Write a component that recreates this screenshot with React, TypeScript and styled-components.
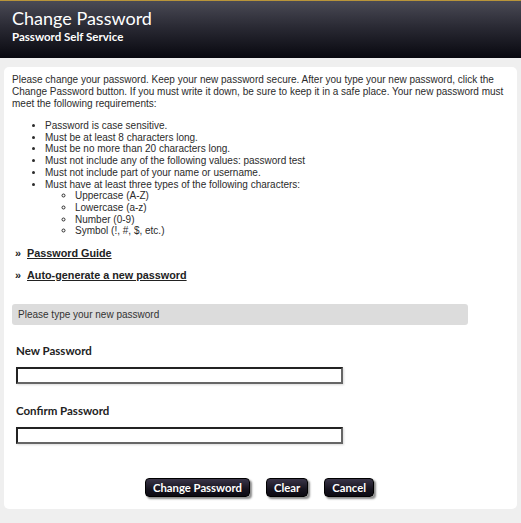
import React from "react";
import styled, { createGlobalStyle } from "styled-components";

const Global = createGlobalStyle`
  html, body { margin: 0; padding: 0; background: #efefef; }
  body { font-family: "Liberation Sans", Arial, sans-serif; }
`;

const Page = styled.div`
  width: 521px;
  height: 523px;
  background: #efefef;
  display: flex;
  flex-direction: column;
  overflow: hidden;
`;

const Header = styled.header`
  height: 58px;
  box-sizing: border-box;
  border-top: 1px solid #b8943a;
  background: linear-gradient(to bottom, #4a4a55 0%, #2a2a34 45%, #08080f 100%);
  padding: 5px 12px 0;
  color: #fff;
  font-family: Lato, "Open Sans", sans-serif;
`;

const Title = styled.h1`
  margin: 0;
  font-size: 18px;
  font-weight: 400;
  line-height: 24px;
`;

const Subtitle = styled.div`
  font-size: 11.5px;
  font-weight: 700;
  line-height: 14px;
`;

const Panel = styled.main`
  margin: 9px 4px 0;
  background: #fff;
  border-radius: 5px;
  padding: 7px 8px 12px;
  color: #2b2b2b;
  font-size: 10px;
  line-height: 11.7px;
`;

const Intro = styled.p`
  margin: 0;
  line-height: 12px;
`;

const List = styled.ul<{ $sub?: boolean }>`
  margin: ${(p) => (p.$sub ? "0" : "10px 0 0")};
  padding-left: ${(p) => (p.$sub ? "30px" : "33px")};
  list-style: ${(p) => (p.$sub ? "circle" : "disc")};
`;

const LinkRow = styled.div<{ $top: number }>`
  margin-top: ${(p) => p.$top}px;
  padding-left: 3px;
  display: flex;
  gap: 6px;
  font-weight: 700;
  font-size: 10.8px;
  color: #222;
`;

const Link = styled.a`
  color: #222;
  text-decoration: underline;
  cursor: pointer;
`;

const Notice = styled.div`
  margin-top: 23px;
  width: 456px;
  height: 21px;
  box-sizing: border-box;
  background: #dcdcdc;
  border-radius: 3px;
  padding: 0 6px;
  display: flex;
  align-items: center;
  color: #333;
`;

const Field = styled.div<{ $top: number }>`
  margin-top: ${(p) => p.$top}px;
  padding-left: 4px;
  display: flex;
  flex-direction: column;
`;

const Label = styled.label`
  font-family: Lato, "Open Sans", sans-serif;
  font-weight: 700;
  font-size: 11.5px;
  line-height: 14px;
  color: #222;
  margin-bottom: 9px;
`;

const Input = styled.input`
  width: 327px;
  height: 17px;
  box-sizing: border-box;
  border: 2px solid #222;
  border-right-color: #666;
  border-bottom-color: #666;
  box-shadow: 1px 1px 2px rgba(0, 0, 0, 0.15);
  background: #fff;
  padding: 0 3px;
  margin: 0;
  outline: none;
`;

const Buttons = styled.div`
  margin-top: 34px;
  display: flex;
  justify-content: center;
  gap: 16px;
  padding-right: 2px;
`;

const Button = styled.button`
  height: 19px;
  padding: 0 7px;
  border: 1px solid #000;
  border-radius: 4px;
  background: linear-gradient(to bottom, #3a3548 0%, #17141f 60%, #0c0a12 100%);
  color: #fff;
  font-family: Lato, "Open Sans", sans-serif;
  font-weight: 700;
  font-size: 11.3px;
  line-height: 17px;
  box-shadow: 2px 2px 2px rgba(0, 0, 0, 0.45);
  cursor: pointer;
`;

export default function App() {
  return (
    <Page>
      <Global />
      <Header>
        <Title>Change Password</Title>
        <Subtitle>Password Self Service</Subtitle>
      </Header>
      <Panel>
        <Intro>
          Please change your password. Keep your new password secure. After you type your new
          password, click the Change Password button. If you must write it down, be sure to keep it
          in a safe place. Your new password must meet the following requirements:
        </Intro>
        <List>
          <li>Password is case sensitive.</li>
          <li>Must be at least 8 characters long.</li>
          <li>Must be no more than 20 characters long.</li>
          <li>Must not include any of the following values: password test</li>
          <li>Must not include part of your name or username.</li>
          <li>
            Must have at least three types of the following characters:
            <List $sub>
              <li>Uppercase (A-Z)</li>
              <li>Lowercase (a-z)</li>
              <li>Number (0-9)</li>
              <li>Symbol (!, #, $, etc.)</li>
            </List>
          </li>
        </List>
        <LinkRow $top={11}>
          <span>»</span>
          <Link>Password Guide</Link>
        </LinkRow>
        <LinkRow $top={10}>
          <span>»</span>
          <Link>Auto-generate a new password</Link>
        </LinkRow>
        <Notice>Please type your new password</Notice>
        <Field $top={19}>
          <Label>New Password</Label>
          <Input type="password" />
        </Field>
        <Field $top={20}>
          <Label>Confirm Password</Label>
          <Input type="password" />
        </Field>
        <Buttons>
          <Button>Change Password</Button>
          <Button>Clear</Button>
          <Button>Cancel</Button>
        </Buttons>
      </Panel>
    </Page>
  );
}
